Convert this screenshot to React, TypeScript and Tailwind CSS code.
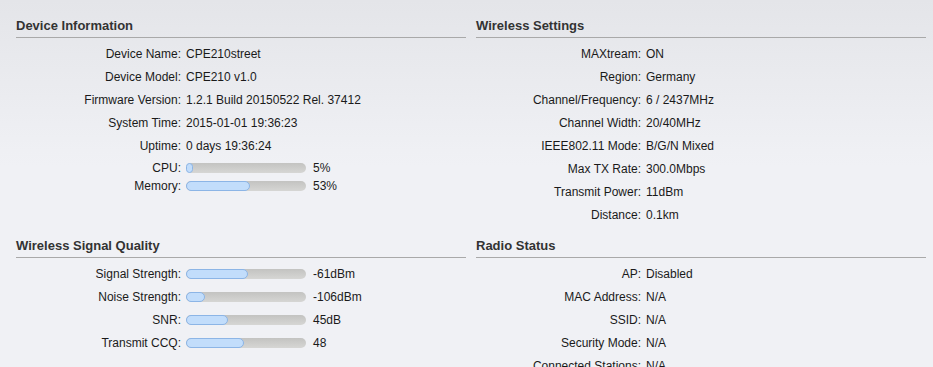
import React from "react";

interface Row {
  label: string;
  value: string;
  bar?: number;
}

const deviceInfo: Row[] = [
  { label: "Device Name:", value: "CPE210street" },
  { label: "Device Model:", value: "CPE210 v1.0" },
  { label: "Firmware Version:", value: "1.2.1 Build 20150522 Rel. 37412" },
  { label: "System Time:", value: "2015-01-01 19:36:23" },
  { label: "Uptime:", value: "0 days 19:36:24" },
];

const usage: Row[] = [
  { label: "CPU:", value: "5%", bar: 5 },
  { label: "Memory:", value: "53%", bar: 53 },
];

const wirelessSettings: Row[] = [
  { label: "MAXtream:", value: "ON" },
  { label: "Region:", value: "Germany" },
  { label: "Channel/Frequency:", value: "6 / 2437MHz" },
  { label: "Channel Width:", value: "20/40MHz" },
  { label: "IEEE802.11 Mode:", value: "B/G/N Mixed" },
  { label: "Max TX Rate:", value: "300.0Mbps" },
  { label: "Transmit Power:", value: "11dBm" },
  { label: "Distance:", value: "0.1km" },
];

const signalQuality: Row[] = [
  { label: "Signal Strength:", value: "-61dBm", bar: 52 },
  { label: "Noise Strength:", value: "-106dBm", bar: 16 },
  { label: "SNR:", value: "45dB", bar: 35 },
  { label: "Transmit CCQ:", value: "48", bar: 48 },
];

const radioStatus: Row[] = [
  { label: "AP:", value: "Disabled" },
  { label: "MAC Address:", value: "N/A" },
  { label: "SSID:", value: "N/A" },
  { label: "Security Mode:", value: "N/A" },
  { label: "Connected Stations:", value: "N/A" },
];

function Bar({ percent }: { percent: number }) {
  return (
    <div className="h-[10px] w-[120px] rounded-full bg-gradient-to-b from-[#c3c3c1] to-[#d6d6d4]">
      <div
        className="h-full rounded-full border border-[#8cb5e6] bg-[#c2ddfb]"
        style={{ width: `${Math.max(percent, 6)}%` }}
      />
    </div>
  );
}

function InfoRow({ row, short }: { row: Row; short?: boolean }) {
  return (
    <div className={`flex items-center ${short ? "h-[18px]" : "h-[23px]"}`}>
      <div className="w-[165px] shrink-0 text-right">{row.label}</div>
      {row.bar !== undefined ? (
        <div className="ml-[5px] flex items-center">
          <Bar percent={row.bar} />
          <span className="ml-[7px]">{row.value}</span>
        </div>
      ) : (
        <div className="ml-[5px]">{row.value}</div>
      )}
    </div>
  );
}

function Section({ title, children }: { title: string; children: React.ReactNode }) {
  return (
    <div>
      <div className="h-[24px] border-b border-[#a9a9a9] text-[13px] font-bold leading-[24px] text-[#333]">
        {title}
      </div>
      <div className="pt-[4px]">{children}</div>
    </div>
  );
}

export default function App() {
  return (
    <div
      className="h-[367px] overflow-hidden bg-gradient-to-b from-[#e4e5e9] to-[#f0f1f5] to-[45%] pl-4 pt-[14px] text-[12px] text-[#1a1a1a]"
      style={{ fontFamily: '"Liberation Sans", Arial, sans-serif' }}
    >
      <div className="grid grid-cols-[450px_450px] gap-x-[10px] gap-y-[8px]">
        <Section title="Device Information">
          {deviceInfo.map((r) => (
            <InfoRow key={r.label} row={r} />
          ))}
          <div className="pt-[2px]">
            {usage.map((r) => (
              <InfoRow key={r.label} row={r} short />
            ))}
          </div>
        </Section>
        <Section title="Wireless Settings">
          {wirelessSettings.map((r) => (
            <InfoRow key={r.label} row={r} />
          ))}
        </Section>
        <Section title="Wireless Signal Quality">
          {signalQuality.map((r) => (
            <InfoRow key={r.label} row={r} />
          ))}
        </Section>
        <Section title="Radio Status">
          {radioStatus.map((r) => (
            <InfoRow key={r.label} row={r} />
          ))}
        </Section>
      </div>
    </div>
  );
}
